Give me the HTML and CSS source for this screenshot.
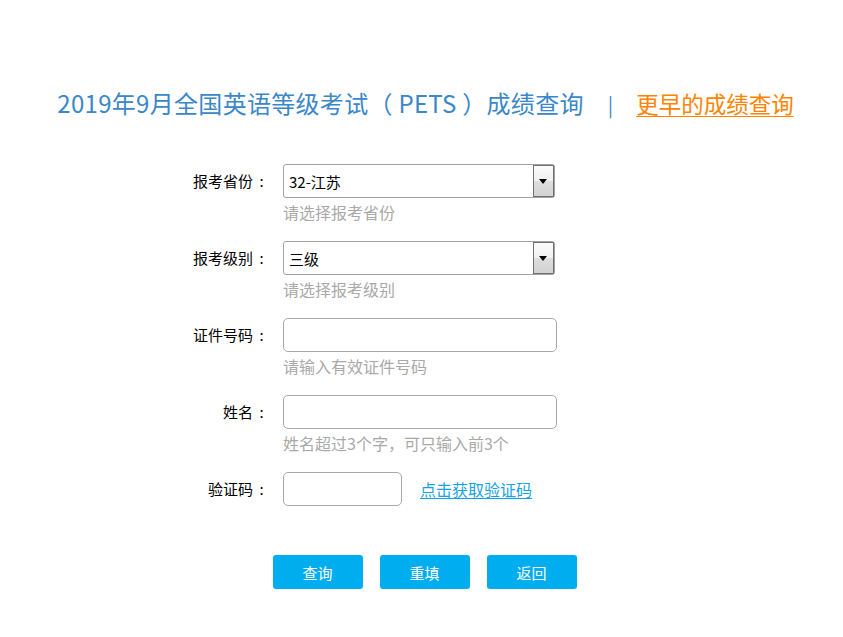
FILE: index.html
```html
<html>
<head>
  <title>PETS成绩查询</title>
  <link rel="stylesheet" href="styles.css">
</head>
<body>
  <div class="page">
    <h1 class="title">
      <span class="title-main">2019年9月全国英语等级考试（ PETS ）成绩查询</span><span class="title-sep">|</span><a class="title-link" href="#">更早的成绩查询</a>
    </h1>

    <form class="query-form">
      <div class="row">
        <label class="label">报考省份<span class="colon">:</span></label>
        <div class="field">
          <div class="select-wrap">
            <select class="select">
              <option>32-江苏</option>
            </select>
            <span class="select-btn"><span class="arrow"></span></span>
          </div>
          <div class="hint">请选择报考省份</div>
        </div>
      </div>

      <div class="row">
        <label class="label">报考级别<span class="colon">:</span></label>
        <div class="field">
          <div class="select-wrap">
            <select class="select">
              <option>三级</option>
            </select>
            <span class="select-btn"><span class="arrow"></span></span>
          </div>
          <div class="hint">请选择报考级别</div>
        </div>
      </div>

      <div class="row">
        <label class="label">证件号码<span class="colon">:</span></label>
        <div class="field">
          <input class="input" type="text">
          <div class="hint">请输入有效证件号码</div>
        </div>
      </div>

      <div class="row">
        <label class="label">姓名<span class="colon">:</span></label>
        <div class="field">
          <input class="input" type="text">
          <div class="hint">姓名超过3个字，可只输入前3个</div>
        </div>
      </div>

      <div class="row row-code">
        <label class="label">验证码<span class="colon">:</span></label>
        <div class="field field-code">
          <input class="input input-code" type="text">
          <a class="code-link" href="#">点击获取验证码</a>
        </div>
      </div>

      <div class="buttons">
        <button type="button" class="btn">查询</button>
        <button type="button" class="btn">重填</button>
        <button type="button" class="btn">返回</button>
      </div>
    </form>
  </div>
</body>
</html>
```

FILE: styles.css
```css
body {
  margin: 0;
  padding: 0;
  background: #ffffff;
  font-family: "Noto Sans CJK SC", "Noto Sans", sans-serif;
  color: #000;
}

.page {
  width: 843px;
}

.title {
  margin: 0;
  padding-top: 86px;
  padding-left: 8px;
  height: 34px;
  line-height: 34px;
  font-size: 24px;
  font-weight: normal;
  text-align: center;
  color: #3a87c9;
  white-space: nowrap;
}

.title-main {
  letter-spacing: 0.3px;
}

.title-sep {
  margin: 0 23px 0 24px;
  font-size: 20px;
  color: #3a87c9;
}

.title-link {
  font-size: 22.5px;
  color: #ff8400;
  text-decoration: underline;
  text-underline-offset: 3px;
  text-decoration-thickness: 1px;
}

.query-form {
  margin: 44px 0 0 0;
}

.row {
  display: flex;
  margin-bottom: 19px;
}

.label {
  width: 283px;
  padding-right: 13px;
  box-sizing: border-box;
  text-align: right;
  font-size: 15px;
  line-height: 34px;
  height: 34px;
  white-space: nowrap;
}

.colon {
  display: inline-block;
  width: 17px;
  text-align: center;
}

.select-wrap {
  position: relative;
  width: 272px;
  height: 34px;
}

.select {
  width: 272px;
  height: 34px;
  border: 1px solid #a2a2a2;
  border-radius: 3px;
  padding: 0 0 0 5px;
  font-family: "Noto Sans CJK SC", "Noto Sans", sans-serif;
  font-size: 15px;
  color: #000;
  background: #fff;
  appearance: none;
  -webkit-appearance: none;
  outline: none;
}

.select-btn {
  position: absolute;
  top: 1px;
  right: 1px;
  width: 19px;
  height: 30px;
  border: 1px solid #6f6f6f;
  background: linear-gradient(#fbfbfb, #f0f0f0 50%, #dedede 51%, #d2d2d2);
  pointer-events: none;
}

.arrow {
  position: absolute;
  left: 5px;
  top: 13px;
  width: 0;
  height: 0;
  border-left: 4px solid transparent;
  border-right: 4px solid transparent;
  border-top: 5px solid #000;
}

.input {
  display: block;
  width: 274px;
  height: 34px;
  box-sizing: border-box;
  border: 1px solid #a9a9a9;
  border-radius: 5px;
  padding: 0 6px;
  font-size: 15px;
  outline: none;
}

.hint {
  margin-top: 4px;
  height: 20px;
  line-height: 20px;
  font-size: 16px;
  color: #a9a9a9;
  white-space: nowrap;
}

.field-code {
  display: flex;
  align-items: center;
}

.input-code {
  width: 119px;
}

.code-link {
  margin-left: 18px;
  font-size: 16px;
  color: #16a2e6;
  text-decoration: underline;
  text-underline-offset: 2px;
}

.row-code {
  margin-bottom: 49px;
}

.buttons {
  display: flex;
  justify-content: center;
  gap: 17px;
  padding-left: 6px;
}

.btn {
  width: 90px;
  height: 34px;
  border: none;
  border-radius: 3px;
  background-color: #00adef;
  color: #fff;
  font-family: "Noto Sans CJK SC", "Noto Sans", sans-serif;
  font-size: 15px;
  cursor: pointer;
}
```
